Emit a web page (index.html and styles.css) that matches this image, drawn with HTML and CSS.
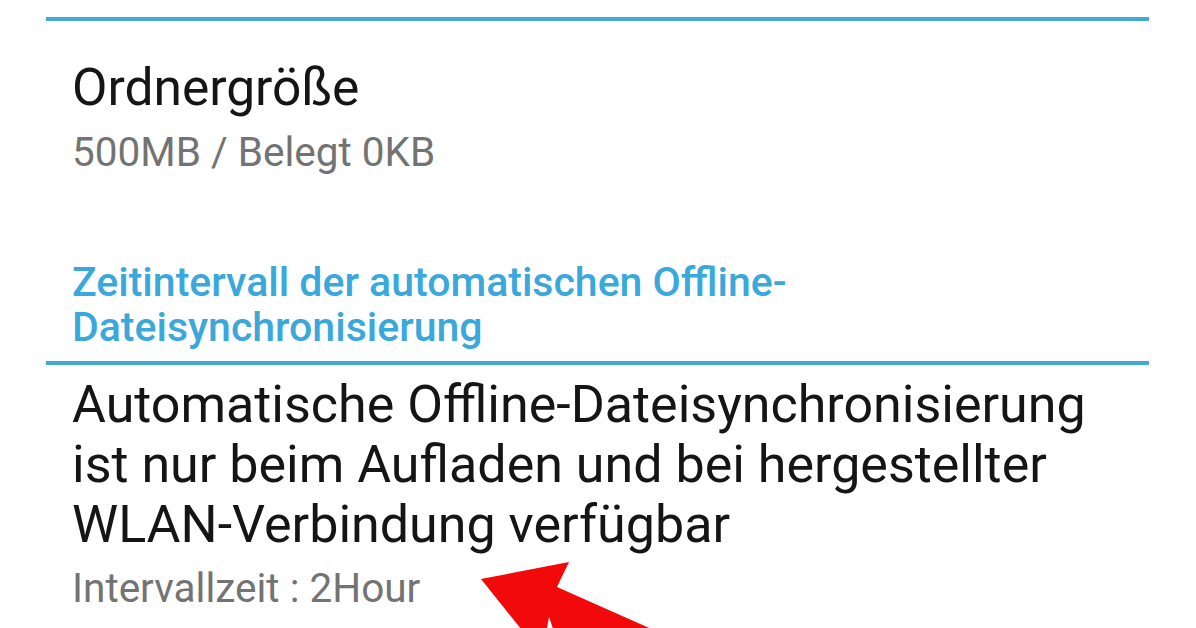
FILE: index.html
```html
<!DOCTYPE html>
<html lang="de">
<head>
<meta charset="utf-8">
<title>Einstellungen</title>
<link rel="stylesheet" href="styles.css">
</head>
<body>
<div class="screen">
  <div class="divider divider-top"></div>
  <div class="pref pref-size">
    <div class="pref-title">Ordnergröße</div>
    <div class="pref-summary">500MB / Belegt 0KB</div>
  </div>
  <div class="category">Zeitintervall der automatischen Offline-<br>Dateisynchronisierung</div>
  <div class="divider"></div>
  <div class="pref pref-sync">
    <div class="pref-title">Automatische Offline-Dateisynchronisierung<br>ist nur beim Aufladen und bei hergestellter<br>WLAN-Verbindung verfügbar</div>
    <div class="pref-summary">Intervallzeit : 2Hour</div>
  </div>
  <svg class="arrow" viewBox="0 0 1196 628" width="1196" height="628" aria-hidden="true">
    <path d="M481 579 L569 562 L557 587 L710 655 L562 655 L549 617 L542 655 Z" fill="#f20a0a"/>
  </svg>
</div>
</body>
</html>
```

FILE: styles.css
```css
html, body {
  margin: 0;
  padding: 0;
  background: #ffffff;
}

.screen {
  position: relative;
  width: 1196px;
  height: 628px;
  overflow: hidden;
  box-sizing: border-box;
  padding: 0 47px 0 46px;
  font-family: Roboto, "Noto Sans", sans-serif;
}

.divider {
  height: 4px;
  background: #43aad8;
}

.divider-top {
  margin-top: 17px;
}

.pref {
  padding-left: 26px;
  display: flex;
  flex-direction: column;
}

.pref-size {
  padding-top: 37px;
}

.pref-title {
  font-size: 52px;
  line-height: 60px;
  color: #151515;
  white-space: nowrap;
}

.pref-size .pref-title {
  font-size: 51.5px;
}

.pref-summary {
  font-size: 40.5px;
  line-height: 48px;
  color: #737373;
  margin-top: 10px;
}

.category {
  padding-left: 26px;
  margin-top: 84px;
  font-size: 41px;
  line-height: 45px;
  font-weight: 500;
  color: #3aa8da;
  padding-bottom: 11px;
}

.pref-sync {
  padding-top: 10px;
}

.pref-sync .pref-summary {
  margin-top: 9px;
}

.arrow {
  position: absolute;
  left: 0;
  top: 0;
  pointer-events: none;
}
```
